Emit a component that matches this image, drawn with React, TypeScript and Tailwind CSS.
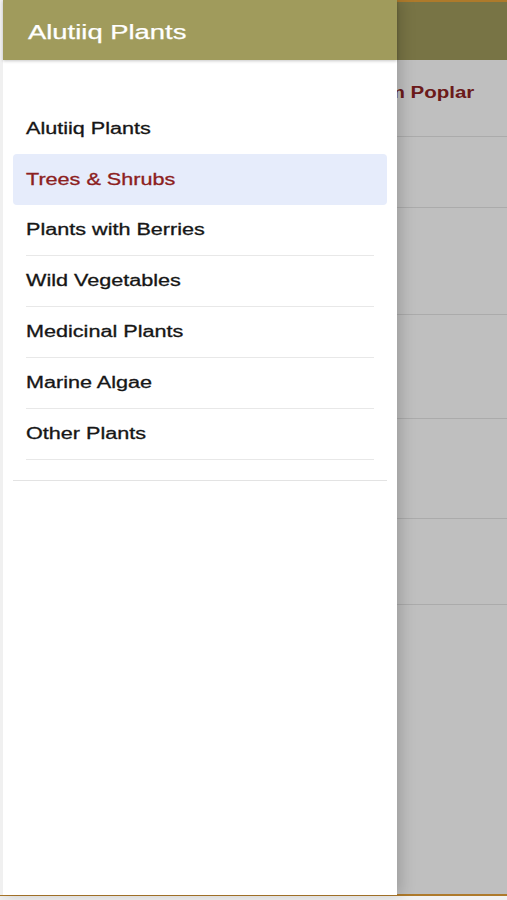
export default function App() {
  const items = [
    "Alutiiq Plants",
    "Trees & Shrubs",
    "Plants with Berries",
    "Wild Vegetables",
    "Medicinal Plants",
    "Marine Algae",
    "Other Plants",
  ];
  const bgRows = [71, 107, 104, 100, 86];
  return (
    <div className="relative h-[900px] w-[507px] overflow-hidden bg-[#f2f2f2] font-['Liberation_Sans',Arial,sans-serif]">
      {/* underlying app screen */}
      <div className="flex h-[896px] flex-col border-b-2 border-[#e8a33a] bg-white">
        <div className="h-[60px] shrink-0 border-t-2 border-[#e8a33a] bg-[#a09b5c]" />
        <div className="flex h-[77px] shrink-0 items-center border-b border-[#e4e4e4] pb-[11px]">
          <span className="ml-[332px] inline-block origin-left scale-x-[1.28] whitespace-nowrap text-[16px] font-bold text-[#8f2424]">
            Balsam Poplar
          </span>
        </div>
        {bgRows.map((h, i) => (
          <div
            key={i}
            className="shrink-0 border-b border-[#e4e4e4]"
            style={{ height: h }}
          />
        ))}
      </div>
      {/* dim overlay */}
      <div className="absolute inset-x-0 top-0 h-[896px] bg-black/25" />
      {/* drawer */}
      <div className="absolute left-0 top-0 flex h-[895px] w-[397px] flex-col border-l-[3px] border-[#f0f0f0] bg-white shadow-[4px_0_14px_rgba(0,0,0,0.18)]">
        <div className="flex h-[60px] shrink-0 items-center bg-[#a09b5c] pl-[25px] pt-[3px] shadow-[0_1px_3px_rgba(0,0,0,0.22)]">
          <span className="inline-block origin-left scale-x-[1.37] whitespace-nowrap text-[20px] text-white [-webkit-text-stroke:0.25px_white]">
            Alutiiq Plants
          </span>
        </div>
        <div className="mx-[10px] mt-[43px] border-b border-[#e3e3e3] pb-[20px]">
          {items.map((label, i) => {
            const active = i === 1;
            const sep = i >= 2;
            return (
              <div
                key={label}
                className={
                  active
                    ? "flex h-[51px] items-center rounded-[4px] bg-[#e6ecfb] px-[13px]"
                    : "flex h-[51px] items-center px-[13px]"
                }
              >
                <div
                  className={
                    sep
                      ? "flex h-full w-full items-center border-b border-[#e8e8e8]"
                      : "flex h-full w-full items-center"
                  }
                >
                  <span
                    className={
                      active
                        ? "inline-block origin-left scale-x-[1.35] whitespace-nowrap text-[16px] text-[#8c2020] [-webkit-text-stroke:0.3px_#8c2020]"
                        : "inline-block origin-left scale-x-[1.35] whitespace-nowrap text-[16px] text-[#161616] [-webkit-text-stroke:0.3px_#161616]"
                    }
                  >
                    {label}
                  </span>
                </div>
              </div>
            );
          })}
        </div>
      </div>
    </div>
  );
}
